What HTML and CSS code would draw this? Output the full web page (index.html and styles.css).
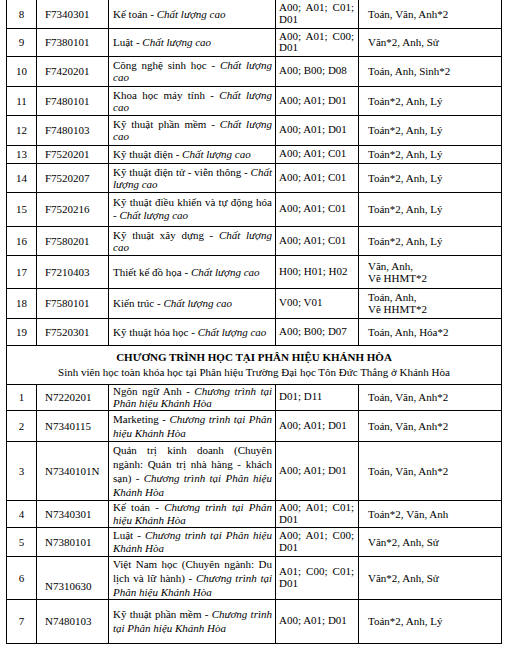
FILE: index.html
```html
<!DOCTYPE html>
<html lang="vi">
<head>
<meta charset="utf-8">
<title>Bảng ngành</title>
<link rel="stylesheet" href="styles.css">
</head>
<body>
<div class="sheet">
<table class="grid">
<colgroup>
<col class="w-stt"><col class="w-code"><col class="w-name"><col class="w-comb"><col class="w-subj">
</colgroup>
<tbody>
<tr class="h28 first"><td class="stt">8</td><td class="code">F7340301</td><td class="name">Kế toán - <i>Chất lượng cao</i></td><td class="comb">A00; A01; C01; D01</td><td class="subj">Toán, Văn, Anh*2</td></tr>
<tr class="h28"><td class="stt">9</td><td class="code">F7380101</td><td class="name">Luật - <i>Chất lượng cao</i></td><td class="comb">A00; A01; C00; D01</td><td class="subj">Văn*2, Anh, Sử</td></tr>
<tr class="h30"><td class="stt">10</td><td class="code">F7420201</td><td class="name">Công nghệ sinh học - <i>Chất lượng cao</i></td><td class="comb">A00; B00; D08</td><td class="subj">Toán, Anh, Sinh*2</td></tr>
<tr class="h29"><td class="stt">11</td><td class="code">F7480101</td><td class="name">Khoa học máy tính - <i>Chất lượng cao</i></td><td class="comb">A00; A01; D01</td><td class="subj">Toán*2, Anh, Lý</td></tr>
<tr class="h30"><td class="stt">12</td><td class="code">F7480103</td><td class="name">Kỹ thuật phần mềm - <i>Chất lượng cao</i></td><td class="comb">A00; A01; D01</td><td class="subj">Toán*2, Anh, Lý</td></tr>
<tr class="h18"><td class="stt">13</td><td class="code">F7520201</td><td class="name">Kỹ thuật điện - <i>Chất lượng cao</i></td><td class="comb">A00; A01; C01</td><td class="subj">Toán*2, Anh, Lý</td></tr>
<tr class="h29"><td class="stt">14</td><td class="code">F7520207</td><td class="name">Kỹ thuật điện tử - viễn thông - <i>Chất lượng cao</i></td><td class="comb">A00; A01; C01</td><td class="subj">Toán*2, Anh, Lý</td></tr>
<tr class="h34"><td class="stt">15</td><td class="code">F7520216</td><td class="name loose">Kỹ thuật điều khiển và tự động hóa - <i>Chất lượng cao</i></td><td class="comb">A00; A01; C01</td><td class="subj">Toán*2, Anh, Lý</td></tr>
<tr class="h29"><td class="stt">16</td><td class="code">F7580201</td><td class="name">Kỹ thuật xây dựng - <i>Chất lượng cao</i></td><td class="comb">A00; A01; C01</td><td class="subj">Toán*2, Anh, Lý</td></tr>
<tr class="h33"><td class="stt">17</td><td class="code">F7210403</td><td class="name">Thiết kế đồ họa - <i>Chất lượng cao</i></td><td class="comb">H00; H01; H02</td><td class="subj">Văn, Anh,<br>Vẽ HHMT*2</td></tr>
<tr class="h30"><td class="stt">18</td><td class="code">F7580101</td><td class="name">Kiến trúc - <i>Chất lượng cao</i></td><td class="comb">V00; V01</td><td class="subj">Toán, Anh,<br>Vẽ HHMT*2</td></tr>
<tr class="h27"><td class="stt">19</td><td class="code">F7520301</td><td class="name">Kỹ thuật hóa học - <i>Chất lượng cao</i></td><td class="comb">A00; B00; D07</td><td class="subj">Toán, Anh, Hóa*2</td></tr>
<tr class="h39"><td class="section" colspan="5"><div class="sec-title">CHƯƠNG TRÌNH HỌC TẠI PHÂN HIỆU KHÁNH HÒA</div><div class="sec-sub">Sinh viên học toàn khóa học tại Phân hiệu Trường Đại học Tôn Đức Thắng ở Khánh Hòa</div></td></tr>
<tr class="h26 p2 tight"><td class="stt">1</td><td class="code">N7220201</td><td class="name">Ngôn ngữ Anh - <i>Chương trình tại Phân hiệu Khánh Hòa</i></td><td class="comb">D01; D11</td><td class="subj">Toán, Văn, Anh*2</td></tr>
<tr class="h31 p2"><td class="stt">2</td><td class="code">N7340115</td><td class="name">Marketing - <i>Chương trình tại Phân hiệu Khánh Hòa</i></td><td class="comb">A00; A01; D01</td><td class="subj">Toán, Văn, Anh*2</td></tr>
<tr class="h59 p2"><td class="stt">3</td><td class="code">N7340101N</td><td class="name">Quản trị kinh doanh (Chuyên ngành: Quản trị nhà hàng - khách sạn) - <i>Chương trình tại Phân hiệu Khánh Hòa</i></td><td class="comb">A00; A01; D01</td><td class="subj">Toán, Văn, Anh*2</td></tr>
<tr class="h27 p2 tight"><td class="stt">4</td><td class="code">N7340301</td><td class="name">Kế toán - <i>Chương trình tại Phân hiệu Khánh Hòa</i></td><td class="comb">A00; A01; C01; D01</td><td class="subj">Toán*2, Văn, Anh</td></tr>
<tr class="h29 p2 tight"><td class="stt">5</td><td class="code">N7380101</td><td class="name">Luật - <i>Chương trình tại Phân hiệu Khánh Hòa</i></td><td class="comb">A00; A01; C00; D01</td><td class="subj">Văn*2, Anh, Sử</td></tr>
<tr class="h43 p2"><td class="stt">6</td><td class="code low">N7310630</td><td class="name">Việt Nam học (Chuyên ngành: Du lịch và lữ hành) - <i>Chương trình tại Phân hiệu Khánh Hòa</i></td><td class="comb">A01; C00; C01; D01</td><td class="subj">Văn*2, Anh, Sử</td></tr>
<tr class="h44 p2"><td class="stt">7</td><td class="code">N7480103</td><td class="name">Kỹ thuật phần mềm - <i>Chương trình tại Phân hiệu Khánh Hòa</i></td><td class="comb">A00; A01; D01</td><td class="subj">Toán*2, Anh, Lý</td></tr>
</tbody>
</table>
</div>
</body>
</html>
```

FILE: styles.css
```css
html, body {
  margin: 0;
  padding: 0;
  background: #ffffff;
}
body {
  font-family: "Liberation Serif", "Times New Roman", Times, serif;
  font-size: 11px;
  color: #000000;
}
.sheet {
  padding-left: 6px;
}
.grid {
  border-collapse: collapse;
  table-layout: fixed;
  width: 495px;
}
.w-stt { width: 30px; }
.w-code { width: 72px; }
.w-name { width: 167px; }
.w-comb { width: 83px; }
.w-subj { width: 143px; }
.grid td {
  border: 1px solid #000000;
  padding: 0 3px;
  vertical-align: middle;
  line-height: 12px;
}
.grid .first td {
  border-top: none;
}
.grid td.stt {
  text-align: center;
  padding: 0;
}
.grid td.code {
  padding-left: 8px;
}
.grid td.low {
  padding-top: 16px;
}
.grid td.name {
  text-align: justify;
  padding: 0 3px 0 4px;
}
.grid td.loose {
  line-height: 13px;
}
.grid .p2 td.name {
  line-height: 14px;
}
.grid .p2.tight td.name {
  line-height: 12.5px;
}
.grid td.comb {
  text-align: justify;
  padding: 0 4px 0 3px;
  line-height: 11.5px;
}
.grid td.subj {
  padding-left: 9px;
}
.grid td.section {
  text-align: center;
  padding: 0;
}
.sec-title {
  font-weight: bold;
  line-height: 15px;
}
.sec-sub {
  line-height: 15px;
}
.h18 { height: 18px; }
.h26 { height: 26px; }
.h27 { height: 27px; }
.h28 { height: 28px; }
.h29 { height: 29px; }
.h30 { height: 30px; }
.h31 { height: 31px; }
.h33 { height: 33px; }
.h34 { height: 34px; }
.h39 { height: 39px; }
.h43 { height: 43px; }
.h44 { height: 44px; }
.h59 { height: 59px; }
```
